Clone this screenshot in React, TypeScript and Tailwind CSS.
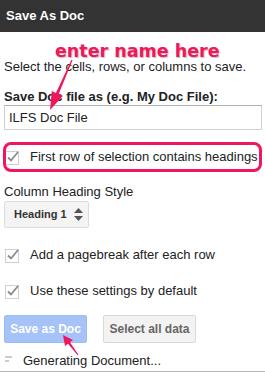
import React from 'react';

function Haken() {
  return (
    <svg width="15" height="15" viewBox="0 0 15 15" className="shrink-0">
      <rect x="0.5" y="1.5" width="13" height="13" fill="#fff" stroke="#cfcfcf" />
      <path d="M3 7.5 L6 10.5 L13 2" fill="none" stroke="#8a8a8a" strokeWidth="1.8" />
    </svg>
  );
}

function CheckZeile({ text, className }: { text: string; className?: string }) {
  return (
    <div className={`flex items-center gap-[10px] pl-[1px] h-[16px] leading-[16px] ${className ?? ''}`}>
      <Haken />
      <span>{text}</span>
    </div>
  );
}

export default function App() {
  return (
    <div className="relative w-[265px] h-[372px] overflow-hidden bg-white font-['Liberation_Sans',Arial,sans-serif] text-[13px] text-[#222] border-b border-[#b5b5b5]">
      <header className="h-[32px] bg-[#333333] text-white font-bold px-[6px] flex items-center">Save As Doc</header>

      <div className="px-[4px] pt-[27px] flex flex-col">
        <p className="leading-[16px] whitespace-nowrap">Select the cells, rows, or columns to save.</p>
        <label className="mt-[14px] font-bold leading-[16px] whitespace-nowrap">Save Doc file as (e.g. My Doc File):</label>
        <div className="h-[25px] w-[258px] border border-[#d0d0d0] border-t-[#b0b0b0] flex items-center px-[4px]">ILFS Doc File</div>

        <CheckZeile className="mt-[19px]" text="First row of selection contains headings" />

        <p className="mt-[19px] leading-[16px]">Column Heading Style</p>
        <div className="mt-[1px] w-[85px] h-[27px] bg-[#f4f4f4] border border-[#dcdcdc] rounded-[2px] flex items-center justify-between pl-[9px] pr-[5px] text-[11px] font-bold text-[#333]">
          <span>Heading 1</span>
          <svg width="9" height="13" viewBox="0 0 9 13">
            <path d="M4.5 0 L9 5 L0 5 Z" fill="#555" />
            <path d="M4.5 13 L9 8 L0 8 Z" fill="#555" />
          </svg>
        </div>

        <CheckZeile className="mt-[19px]" text="Add a pagebreak after each row" />
        <CheckZeile className="mt-[20px]" text="Use these settings by default" />

        <div className="mt-[16px] flex gap-[16px]">
          <button className="w-[83px] h-[28px] rounded-[2px] bg-[#a5c3f6] border border-[#9dbcf2] text-white text-[12px] font-bold">Save as Doc</button>
          <button className="w-[93px] h-[28px] rounded-[2px] bg-[#f3f3f3] border border-[#d8d8d8] text-[#666] text-[12px] font-bold">Select all data</button>
        </div>

        <div className="mt-[10px] flex items-center gap-[10px] leading-[16px]">
          <svg width="8" height="12" viewBox="0 0 8 12" className="ml-[1px]">
            <line x1="0" y1="2" x2="7" y2="2" stroke="#999" />
            <line x1="0" y1="6" x2="4" y2="6" stroke="#999" />
          </svg>
          <span>Generating Document...</span>
        </div>
      </div>

      {/* Markierungen aus dem Screenshot */}
      <div className="absolute left-[3px] top-[142px] w-[259px] h-[30px] border-[3px] border-[#f0175c] rounded-[8px] pointer-events-none" />
      <div className="absolute left-[55px] top-[40px] font-['DejaVu_Sans',sans-serif] font-bold text-[17.5px] leading-[22px] text-[#f0175c] whitespace-nowrap [text-shadow:1px_1px_1px_rgba(0,0,0,0.25)]">
        enter name here
      </div>
      <svg className="absolute inset-0 pointer-events-none" width="265" height="372">
        <polygon
          points="71.45,59.76 72.55,60.24 58.7,94.1 62.8,95.9 50,110 51.8,91.1 55.9,92.9"
          fill="#f0175c"
        />
        <polygon
          points="78.4,354.7 77.6,355.3 68,343.7 65,346 63,335 73,340 70,342.3"
          fill="#f0175c"
        />
      </svg>
    </div>
  );
}
